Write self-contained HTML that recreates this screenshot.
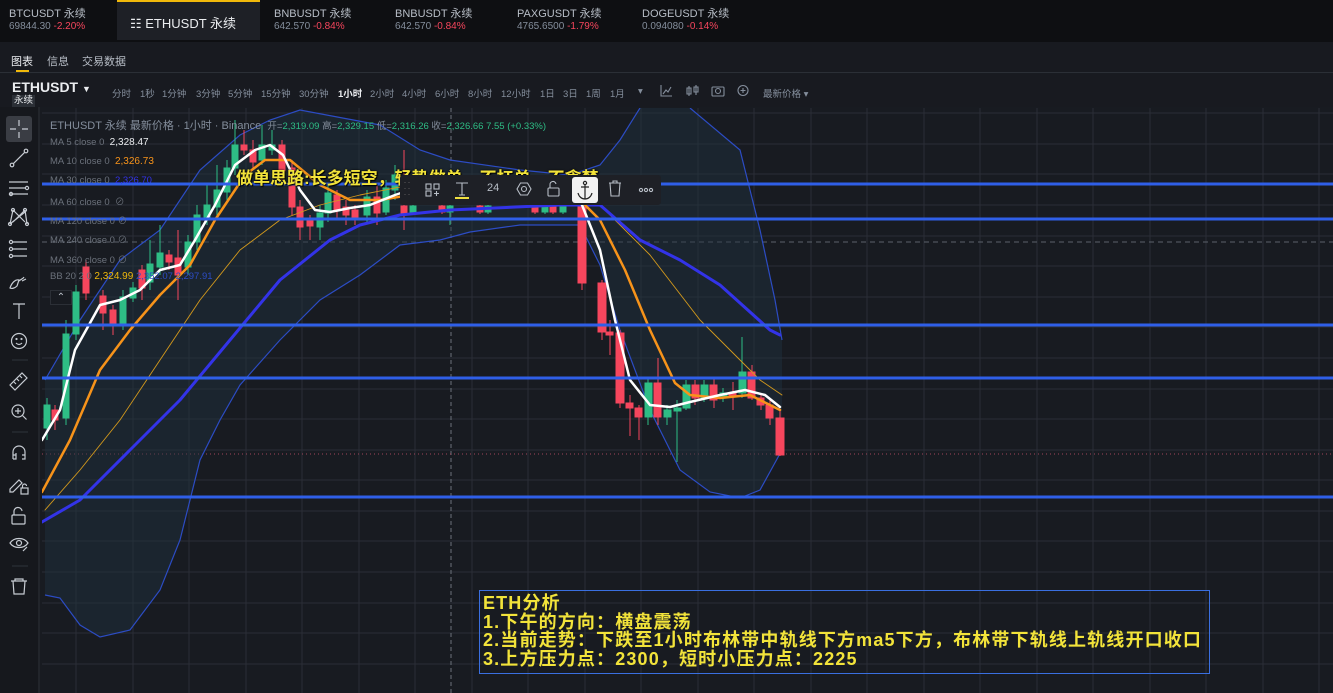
<!DOCTYPE html>
<html><head><meta charset="utf-8">
<style>
*{margin:0;padding:0;box-sizing:border-box}
body{width:1333px;height:693px;overflow:hidden;background:#181b21;font-family:"Liberation Sans","Noto Sans CJK SC",sans-serif;position:relative;color:#848e9c}
.abs{position:absolute;white-space:nowrap}
#top{position:absolute;left:0;top:0;width:1333px;height:42px;background:#0e0f12}
.tk{position:absolute;top:8px;font-size:11px;color:#b7bdc6;line-height:12px}
.tk .p{font-size:10px;color:#848e9c}
.tk .r{color:#f6465d}
#tabs{position:absolute;left:0;top:42px;width:1333px;height:31px;background:#181a20;border-bottom:1px solid #2b2f36}
#tb{position:absolute;left:0;top:74px;width:1333px;height:33px;background:#181a20}
.tf{position:absolute;top:86px;font-size:9.5px;color:#848e9c}
#lt{position:absolute;left:0;top:107px;width:40px;height:586px;background:#16181d;border-right:2px solid #22252b}
.lg{position:absolute;left:50px;font-size:9.5px;color:#6b717b}
.yt{position:absolute;font-weight:bold;color:#f2e33a;font-size:17px;text-shadow:0 0 2px #000,1px 1px 1px #000}
</style></head><body>
<div id="top">
 <div class="tk" style="left:9px">BTCUSDT 永续<br><span class="p">69844.30 <span class="r">-2.20%</span></span></div>
 <div style="position:absolute;left:117px;top:0;width:143px;height:40px;background:#1e2026;border-top:2px solid #f0b90b"></div>
 <div class="abs" style="left:130px;top:13px;font-size:13px;color:#eaecef">☷ ETHUSDT 永续</div>
 <div class="tk" style="left:274px">BNBUSDT 永续<br><span class="p">642.570 <span class="r">-0.84%</span></span></div>
 <div class="tk" style="left:395px">BNBUSDT 永续<br><span class="p">642.570 <span class="r">-0.84%</span></span></div>
 <div class="tk" style="left:517px">PAXGUSDT 永续<br><span class="p">4765.6500 <span class="r">-1.79%</span></span></div>
 <div class="tk" style="left:642px">DOGEUSDT 永续<br><span class="p">0.094080 <span class="r">-0.14%</span></span></div>
</div>
<div id="tabs">
 <div class="abs" style="left:11px;top:11px;font-size:11px;color:#eaecef">图表</div>
 <div style="position:absolute;left:16px;top:28px;width:13px;height:2px;background:#f0b90b"></div>
 <div class="abs" style="left:47px;top:11px;font-size:11px;color:#b7bdc6">信息</div>
 <div class="abs" style="left:82px;top:11px;font-size:11px;color:#b7bdc6">交易数据</div>
</div>
<div id="tb"></div>
<div class="abs" style="left:12px;top:79px;font-size:14px;font-weight:bold;color:#eaecef">ETHUSDT <span style="font-size:9px">▼</span></div>
<div class="abs" style="left:12px;top:95px;font-size:9.5px;color:#eaecef;background:#2b2f36;padding:0 2px;line-height:12px">永续</div>
<div class="tf" style="left:112px">分时</div><div class="tf" style="left:140px">1秒</div><div class="tf" style="left:162px">1分钟</div><div class="tf" style="left:196px">3分钟</div><div class="tf" style="left:228px">5分钟</div><div class="tf" style="left:261px">15分钟</div><div class="tf" style="left:299px">30分钟</div><div class="tf" style="left:338px;color:#eaecef;font-weight:bold">1小时</div><div class="tf" style="left:370px">2小时</div><div class="tf" style="left:402px">4小时</div><div class="tf" style="left:435px">6小时</div><div class="tf" style="left:468px">8小时</div><div class="tf" style="left:501px">12小时</div><div class="tf" style="left:540px">1日</div><div class="tf" style="left:563px">3日</div><div class="tf" style="left:586px">1周</div><div class="tf" style="left:610px">1月</div><div class="tf" style="left:638px">▾</div><div class="tf" style="left:763px">最新价格 ▾</div>
<svg class="abs" style="left:0;top:0" width="1333" height="110" fill="none" stroke="#848e9c" stroke-width="1.1">
 <path d="M661 85v11h11M663 94l3-4 2 2 3-5"/>
 <path d="M689 86v10M687 88h4v6h-4zM696 85v10M694 87h4v5h-4z"/>
 <circle cx="718" cy="91" r="2.5"/><rect x="712" y="87" width="12" height="9" rx="1"/>
 <circle cx="743" cy="90.5" r="5"/><path d="M743 88v5M740.5 90.5h5"/>
</svg>
<div id="lt"></div>
<svg class="abs" style="left:0;top:0" width="1333" height="693">
 <defs><clipPath id="c"><rect x="42" y="108" width="1291" height="585"/></clipPath></defs>
 <g clip-path="url(#c)">
 <g stroke="#2a2e36" stroke-width="1">
  <path d="M76 108V693M133 108V693M189 108V693M246 108V693M302 108V693M359 108V693M415 108V693M472 108V693M528 108V693M585 108V693M641 108V693M698 108V693M754 108V693M811 108V693M867 108V693M924 108V693M980 108V693M1037 108V693M1093 108V693M1150 108V693M1206 108V693M1263 108V693M1319 108V693"/>
  <path d="M40 113H1333M40 144H1333M40 174H1333M40 205H1333M40 236H1333M40 266H1333M40 297H1333M40 327H1333M40 358H1333M40 389H1333M40 419H1333M40 450H1333M40 480H1333M40 511H1333M40 541H1333M40 572H1333M40 603H1333M40 633H1333M40 664H1333"/>
 </g>
 <path d="M451 108V693" stroke="#6b717b" stroke-dasharray="4 3"/>
 <path d="M42 242H1333" stroke="#5b616b" stroke-dasharray="5 4"/>
 <path d="M42 454H1333" stroke="#a0455a" stroke-dasharray="1 3"/>
 <path d="M45 380L80 320L120 260L160 230L200 170L240 135L270 120L300 110L380 125L420 150L450 160L520 170L570 175L600 165L620 140L640 108L690 108L740 150L760 230L775 300L782 340L782 450L760 490L740 498L710 492L680 470L650 410L620 330L600 265L580 225L520 225L470 232L440 240L400 245L360 275L320 300L280 340L240 385L220 420L200 460L180 540L160 590L130 630L100 637L80 625L60 598L45 595Z" fill="#1f3440" fill-opacity="0.45"/>
 <g fill="none" stroke="#2c4cc4" stroke-width="1.2">
  <path d="M45 380L80 320L120 260L160 230L200 170L240 135L270 120L300 110L380 125L420 150L450 160L520 170L570 175L600 165L620 140L640 108"/>
  <path d="M690 108L740 150L760 230L775 300L782 340"/>
  <path d="M45 595L60 598L80 625L100 637L130 630L160 590L180 540L200 460L220 420L240 385L280 340L320 300L360 275L400 245L440 240L470 232L520 225L580 225L600 265L620 330L650 410L680 470L710 492L740 498L760 490L782 450"/>
 </g>
 <g stroke-width="1">
 <g fill="#2ebd85" stroke="#2ebd85">
  <path d="M47 398V440M66 320V425M76 285V340M123 290V330M133 282V302M150 240V290M160 225V275M188 235V275M197 205V250M207 185V225M217 165V215M227 160V200M235 120V175M262 125V165M272 130V155M320 205V240M328 185V222M367 190V222M386 180V215M395 165V200M413 200V215M450 200V225M488 204V214M545 204V214M563 204V214M648 378V425M667 405V425M677 400V462M686 380V410M704 380V402M723 388V402M742 337V398"/>
  <rect x="44" y="405" width="6" height="23"/><rect x="63" y="334" width="6" height="84"/><rect x="73" y="292" width="6" height="42"/><rect x="120" y="297" width="6" height="26"/><rect x="130" y="288" width="6" height="10"/><rect x="147" y="264" width="6" height="18"/><rect x="157" y="253" width="6" height="14"/><rect x="185" y="242" width="6" height="25"/><rect x="194" y="215" width="6" height="27"/><rect x="204" y="205" width="6" height="12"/><rect x="214" y="190" width="6" height="17"/><rect x="224" y="168" width="6" height="24"/><rect x="232" y="145" width="6" height="23"/><rect x="259" y="145" width="6" height="15"/><rect x="269" y="145" width="6" height="5"/><rect x="317" y="213" width="6" height="14"/><rect x="325" y="193" width="6" height="20"/><rect x="364" y="197" width="6" height="18"/><rect x="383" y="188" width="6" height="24"/><rect x="392" y="175" width="6" height="15"/><rect x="410" y="206" width="6" height="7"/><rect x="447" y="206" width="6" height="6"/><rect x="485" y="206" width="6" height="6"/><rect x="542" y="206" width="6" height="6"/><rect x="560" y="206" width="6" height="6"/><rect x="645" y="383" width="7" height="34"/><rect x="664" y="410" width="7" height="7"/><rect x="674" y="408" width="7" height="3"/><rect x="683" y="385" width="7" height="23"/><rect x="701" y="385" width="7" height="13"/><rect x="720" y="393" width="7" height="5"/><rect x="739" y="372" width="7" height="21"/>
 </g>
 <g fill="#f6465d" stroke="#f6465d">
  <path d="M55 405V430M86 260V300M103 290V330M113 305V335M142 265V300M169 250V270M178 230V300M244 130V155M253 140V170M282 140V180M292 160V215M300 200V240M310 215V240M337 190V220M346 200V225M355 205V225M377 185V225M404 150V230M442 200V214M480 200V214M535 200V214M553 200V214M582 200V290M602 280V340M610 320V355M620 330V408M630 395V436M639 405V440M658 358V425M695 380V405M714 378V408M733 382V410M752 365V400M761 395V410M770 400V425M780 410V456"/>
  <rect x="52" y="410" width="6" height="10"/><rect x="83" y="267" width="6" height="26"/><rect x="100" y="296" width="6" height="17"/><rect x="110" y="310" width="6" height="13"/><rect x="139" y="270" width="6" height="18"/><rect x="166" y="255" width="6" height="7"/><rect x="175" y="258" width="6" height="17"/><rect x="241" y="145" width="6" height="5"/><rect x="250" y="150" width="6" height="12"/><rect x="279" y="145" width="6" height="28"/><rect x="289" y="168" width="6" height="39"/><rect x="297" y="207" width="6" height="20"/><rect x="307" y="220" width="6" height="6"/><rect x="334" y="195" width="6" height="15"/><rect x="343" y="207" width="6" height="8"/><rect x="352" y="210" width="6" height="7"/><rect x="374" y="197" width="6" height="16"/><rect x="401" y="206" width="6" height="7"/><rect x="439" y="206" width="6" height="6"/><rect x="477" y="206" width="6" height="6"/><rect x="532" y="206" width="6" height="6"/><rect x="550" y="206" width="6" height="6"/><rect x="578" y="203" width="8" height="80"/><rect x="598" y="283" width="8" height="49"/><rect x="606" y="332" width="7" height="3"/><rect x="616" y="333" width="8" height="70"/><rect x="626" y="403" width="7" height="5"/><rect x="635" y="408" width="7" height="9"/><rect x="654" y="383" width="7" height="34"/><rect x="692" y="385" width="7" height="13"/><rect x="710" y="385" width="7" height="15"/><rect x="729" y="393" width="7" height="4"/><rect x="748" y="372" width="7" height="26"/><rect x="757" y="398" width="7" height="7"/><rect x="766" y="405" width="7" height="13"/><rect x="776" y="418" width="8" height="37"/>
 </g>
 </g>
 <g fill="none" stroke-linejoin="round" stroke-linecap="round">
  <path d="M45 510L80 470L120 420L160 360L200 300L240 250L280 220L320 205L360 195L410 185L500 190L590 195L650 255L700 320L760 380L782 395" stroke="#d49a1c" stroke-width="0.9"/>
  <path d="M42 522L80 500L130 450L180 400L230 340L280 280L330 240L360 225L400 215L450 210L560 205L600 205L640 240L680 260L720 285L770 330L780 335" stroke="#3333e8" stroke-width="3"/>
  <path d="M42 492L70 440L100 370L130 330L160 295L190 265L215 220L245 175L265 160L290 160L320 185L350 200L380 200L410 195L500 198L580 200L600 220L625 270L650 330L675 383L690 395L720 398L750 395L780 410" stroke="#f7931a" stroke-width="2.5"/>
  <path d="M42 440L60 410L75 350L100 305L120 300L140 290L160 270L180 265L195 240L215 205L235 165L255 150L270 145L283 155L300 190L315 210L330 212L350 208L370 205L395 195L410 190L500 200L580 200L600 250L615 320L630 380L650 405L670 407L690 402L720 395L745 390L765 395L780 407" stroke="#ffffff" stroke-width="2.5"/>
 </g>
 <g stroke="#2f5fe8" stroke-width="3">
  <path d="M42 184H1333M42 219H1333M42 325H1333M42 378H1333M42 497H1333"/>
 </g>
 </g>
 <rect x="6" y="116" width="26" height="26" rx="3" fill="#3a3d44"/>
 <g fill="none" stroke="#c7ccd3" stroke-width="1.2">
  <path d="M19 120v6M19 132v6M10 129h6M22 129h6"/>
  <circle cx="12" cy="165" r="1.8"/><circle cx="26" cy="151" r="1.8"/><path d="M13.3 163.7L24.7 152.3"/>
  <path d="M9 182h19M9 188h17M9 194h19"/><circle cx="27" cy="188" r="1.6"/><circle cx="11" cy="194" r="1.6"/>
  <path d="M13 210l-3 14M13 210l12 12M25 210l-12 12M25 210l2 14M10 224l15-12"/><circle cx="13" cy="210" r="1.5"/><circle cx="25" cy="210" r="1.5"/><circle cx="10" cy="224" r="1.5"/><circle cx="27" cy="224" r="1.5"/>
  <path d="M13 242h14M13 249h14M13 256h14"/><circle cx="11" cy="242" r="1.6"/><circle cx="11" cy="249" r="1.6"/><circle cx="11" cy="256" r="1.6"/>
  <path d="M10 288c2-6 6-9 9-8l-2 6c-2 2-5 3-7 2zM19 281c2-2 4-2 5-4M22 281l4-2"/>
  <path d="M13 304h12M19 304v15"/>
  <circle cx="19" cy="341" r="7.5"/><path d="M16 343c2 2 4 2 6 0"/><circle cx="16.5" cy="339" r=".5"/><circle cx="21.5" cy="339" r=".5"/>
  <path d="M12 360h16M12 432h16M12 566h16" stroke="#2b2f36"/>
  <path d="M10 385l12-12 5 5-12 12zM14 382l2 2M17 379l2 2M20 376l2 2"/>
  <circle cx="18" cy="411" r="6"/><path d="M22.5 415.5l4 4M18 408v6M15 411h6"/>
  <path d="M13 459v-7a6 6 0 0 1 12 0v7M13 455h3M22 455h3M13 459h3v-6M22 459h3v-6"/>
  <path d="M10 489l9-9 3 3-9 9h-3z"/><rect x="21" y="488" width="7" height="6"/><path d="M22.5 488v-2a2 2 0 0 1 4 0"/>
  <rect x="12" y="515" width="13" height="9" rx="1"/><path d="M14 515v-3a4 4 0 0 1 8 -1"/>
  <path d="M10 543c4-6 14-6 18 0c-4 6-14 6-18 0z"/><circle cx="19" cy="543" r="2.5"/><path d="M23 551l4-4"/>
  <path d="M11 581h16M15 581v-2h8v2M13 581l1 13h10l1-13"/>
 </g>
</svg>
<div class="lg" style="top:117px;font-size:11px;color:#848e9c">ETHUSDT 永续 最新价格 · 1小时 · Binance &nbsp;<span style="font-size:9.5px">开=<span style="color:#2ebd85">2,319.09</span> 高=<span style="color:#2ebd85">2,329.15</span> 低=<span style="color:#2ebd85">2,316.26</span> 收=<span style="color:#2ebd85">2,326.66 7.55 (+0.33%)</span></span></div>
<div class="lg" style="top:137px">MA 5 close 0 &nbsp;<span style="color:#eaecef;font-size:10px">2,328.47</span></div>
<div class="lg" style="top:156px">MA 10 close 0 &nbsp;<span style="color:#f7931a;font-size:10px">2,326.73</span></div>
<div class="lg" style="top:175px">MA 30 close 0 &nbsp;<span style="color:#3333e8">2,326.70</span></div>
<div class="lg" style="top:194px">MA 60 close 0 &nbsp;⊘</div>
<div class="lg" style="top:213px">MA 120 close 0 ⊘</div>
<div class="lg" style="top:232px">MA 240 close 0 ⊘</div>
<div class="lg" style="top:252px">MA 360 close 0 ⊘</div>
<div class="lg" style="top:271px">BB 20 2 0 <span style="color:#f0b90b;font-size:10px">2,324.99</span> <span style="color:#2c4cc4">2,352.07 2,297.91</span></div>
<div class="abs" style="left:50px;top:290px;width:22px;height:15px;border:1px solid #2b2f36;background:#181b21;color:#b7bdc6;font-size:10px;text-align:center;line-height:14px">⌃</div>
<div class="yt" style="left:236px;top:164px">做单思路:长多短空，轻势做单，不扛单，不贪婪</div>
<div style="position:absolute;left:400px;top:175px;width:261px;height:30px;background:#1e2026;border-radius:3px"></div>
<svg class="abs" style="left:0;top:0" width="680" height="210" fill="none" stroke="#b7bdc6" stroke-width="1.1">
 <path d="M405 182v1M409 182v1M405 188v1M409 188v1M405 194v1M409 194v1" stroke="#555"/>
 <rect x="426" y="184" width="5" height="5"/><rect x="434" y="184" width="5" height="5"/><rect x="426" y="191" width="5" height="5"/><path d="M434 193.5h5M436.5 191v5"/>
 <path d="M456 183h12M462 183v12M459 195h6"/><path d="M455 198h14" stroke="#f0e040" stroke-width="2"/>
 <path d="M517 189l3.5-6h7l3.5 6-3.5 6h-7z"/><circle cx="524" cy="189" r="2.5"/>
 <rect x="548" y="188" width="11" height="8" rx="1"/><path d="M550 188v-3a3 3 0 0 1 6-1"/>
 <rect x="572" y="177" width="26" height="26" rx="3" fill="#f2f2f2" stroke="none"/>
 <g stroke="#222" stroke-width="1.2"><circle cx="585" cy="183" r="1.6"/><path d="M585 185v14M581 187h8M578 193c1 4 4 6 7 6s6-2 7-6"/></g>
 <path d="M609 183h12M613 183v-2h4v2M610 183l1 13h8l1-13"/>
 <circle cx="641" cy="190" r="1.6"/><circle cx="646" cy="190" r="1.6"/><circle cx="651" cy="190" r="1.6"/>
</svg>
<div class="abs" style="left:487px;top:182px;font-size:11px;color:#b7bdc6">24</div>
<div style="position:absolute;left:479px;top:590px;width:731px;height:84px;border:1px solid #3a6fe0"></div>
<div class="abs" style="left:483px;top:594px;font-size:18px;line-height:18.7px;font-weight:bold;color:#f2e33a;letter-spacing:1.15px">ETH分析<br>1.下午的方向：横盘震荡<br>2.当前走势：下跌至1小时布林带中轨线下方ma5下方，布林带下轨线上轨线开口收口<br>3.上方压力点：2300，短时小压力点：2225</div>
</body></html>
